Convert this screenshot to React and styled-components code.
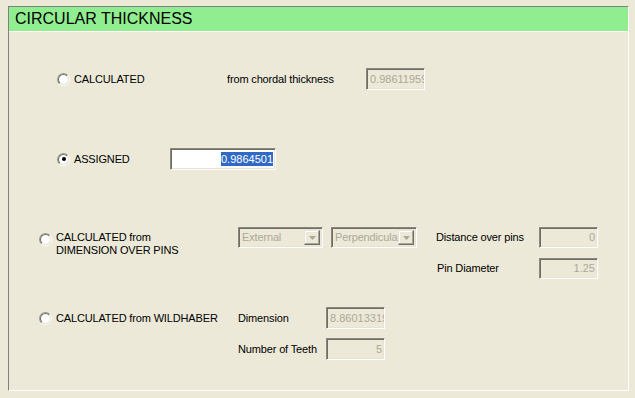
import React from "react";
import styled, { createGlobalStyle } from "styled-components";

const GlobalStyle = createGlobalStyle`
  html, body {
    margin: 0;
    padding: 0;
    background: #ece9d8;
  }
  body {
    font-family: "Liberation Sans", Arial, sans-serif;
    font-size: 11px;
    color: #000;
  }
`;

const Page = styled.div`
  width: 635px;
  height: 398px;
  box-sizing: border-box;
  padding: 6px 0 0 8px;
  background: #ece9d8;
`;

const Frame = styled.div`
  width: 621px;
  height: 385px;
  box-sizing: border-box;
  border: 1px solid;
  border-color: #808080 #fff #fff #808080;
`;

const Header = styled.div`
  height: 24px;
  background: #90ee90;
  border-bottom: 1px solid #fff;
  padding-left: 6px;
  font-size: 16px;
  line-height: 24px;
  color: #000;
`;

const Body = styled.div`
  padding-top: 36px;
  letter-spacing: -0.15px;
`;

const Row = styled.div`
  display: flex;
  align-items: center;
  height: 22px;
  margin-top: ${(p) => p.$gap || 0}px;
  padding-left: ${(p) => p.$indent}px;
`;

const Block = styled.div`
  display: grid;
  grid-template-columns: ${(p) => p.$cols};
  grid-auto-rows: ${(p) => p.$rowH}px;
  row-gap: ${(p) => p.$rowGap}px;
  align-items: center;
  margin-top: ${(p) => p.$gap}px;
  padding-left: ${(p) => p.$indent}px;
`;

const Option = styled.div`
  display: flex;
  align-items: ${(p) => (p.$top ? "flex-start" : "center")};
  gap: 4px;
  width: ${(p) => p.$w}px;
  align-self: ${(p) => (p.$top ? "start" : "center")};
  margin-top: ${(p) => (p.$top ? 4 : 0)}px;
`;

const RadioOuter = styled.span`
  flex: none;
  width: 13px;
  height: 13px;
  box-sizing: border-box;
  border-radius: 50%;
  border: 1px solid;
  border-color: #9c9a90 #fff #fff #9c9a90;
  margin-top: ${(p) => (p.$top ? 2 : 0)}px;
  display: flex;
`;

const RadioInner = styled.span`
  flex: 1;
  border-radius: 50%;
  border: 1px solid;
  border-color: #6f6d64 #e6e3d6 #e6e3d6 #6f6d64;
  background: #fff;
  display: flex;
  align-items: center;
  justify-content: center;
`;

const Dot = styled.span`
  width: 4px;
  height: 4px;
  border-radius: 50%;
  background: #000;
`;

const Text = styled.span`
  line-height: 13px;
  white-space: nowrap;
  width: ${(p) => (p.$w ? `${p.$w}px` : "auto")};
  padding-left: ${(p) => p.$pad || 0}px;
`;

const Field = styled.div`
  width: ${(p) => p.$w}px;
  height: ${(p) => p.$h || 22}px;
  box-sizing: border-box;
  border: 1px solid;
  border-color: #8a887e #fff #fff #8a887e;
  box-shadow: inset 1px 1px 0 #6f6d64, inset -1px -1px 0 #e6e3d6;
  background: ${(p) => (p.$active ? "#fff" : "#ece9d8")};
  color: ${(p) => (p.$active ? "#000" : "#aca899")};
  padding: 0 2px 0 3px;
  text-align: right;
  overflow: hidden;
  white-space: nowrap;
  letter-spacing: 0;
  line-height: ${(p) => (p.$h || 22) - 2}px;
`;

const Selected = styled.span`
  background: #316ac5;
  color: #fff;
  padding: 1px 0;
`;

const Combo = styled.div`
  width: ${(p) => p.$w}px;
  height: 21px;
  box-sizing: border-box;
  border: 1px solid;
  border-color: #8a887e #fff #fff #8a887e;
  box-shadow: inset 1px 1px 0 #6f6d64, inset -1px -1px 0 #e6e3d6;
  padding: 2px;
  display: flex;
  align-items: stretch;
  justify-self: start;
`;

const ComboText = styled.span`
  flex: 1;
  min-width: 0;
  overflow: hidden;
  white-space: nowrap;
  color: #aca899;
  line-height: 15px;
  padding-left: 1px;
`;

const ComboButton = styled.span`
  flex: none;
  width: 16px;
  box-sizing: border-box;
  border: 1px solid;
  border-color: #e6e3d6 #6f6d64 #6f6d64 #e6e3d6;
  box-shadow: inset -1px -1px 0 #aca899, inset 1px 1px 0 #fff;
  background: #ece9d8;
  display: flex;
  align-items: center;
  justify-content: center;
`;

const Radio = ({ checked, top }) => (
  <RadioOuter $top={top}>
    <RadioInner>{checked && <Dot />}</RadioInner>
  </RadioOuter>
);

const Arrow = () => (
  <svg width="7" height="4" viewBox="0 0 7 4">
    <path d="M0 0H7L3.5 4Z" fill="#aca899" />
  </svg>
);

const Select = ({ w, value }) => (
  <Combo $w={w}>
    <ComboText>{value}</ComboText>
    <ComboButton>
      <Arrow />
    </ComboButton>
  </Combo>
);

export default function App() {
  return (
    <Page>
      <GlobalStyle />
      <Frame>
        <Header>CIRCULAR THICKNESS</Header>
        <Body>
          <Row $indent={48}>
            <Option $w={170}>
              <Radio />
              <Text>CALCULATED</Text>
            </Option>
            <Text $w={139}>from chordal thickness</Text>
            <Field $w={59}>0.986119594</Field>
          </Row>

          <Row $indent={48} $gap={58}>
            <Option $w={113}>
              <Radio checked />
              <Text>ASSIGNED</Text>
            </Option>
            <Field $w={106} $active>
              <Selected>0.9864501</Selected>
            </Field>
          </Row>

          <Block
            $indent={30}
            $gap={57}
            $rowH={21}
            $rowGap={10}
            $cols="199px 93px 105px 103px 59px"
          >
            <Option $top>
              <Radio top />
              <Text>
                CALCULATED from
                <br />
                DIMENSION OVER PINS
              </Text>
            </Option>
            <Select w={85} value="External" />
            <Select w={86} value="Perpendicular" />
            <Text>Distance over pins</Text>
            <Field $w={59} $h={21}>0</Field>
            <span />
            <span />
            <span />
            <Text $pad={1}>Pin Diameter</Text>
            <Field $w={59} $h={21}>1.25</Field>
          </Block>

          <Block
            $indent={30}
            $gap={28}
            $rowH={22}
            $rowGap={9}
            $cols="199px 88px 59px"
          >
            <Option>
              <Radio />
              <Text>CALCULATED from WILDHABER</Text>
            </Option>
            <Text>Dimension</Text>
            <Field $w={59}>8.860133194</Field>
            <span />
            <Text>Number of Teeth</Text>
            <Field $w={59}>5</Field>
          </Block>
        </Body>
      </Frame>
    </Page>
  );
}
